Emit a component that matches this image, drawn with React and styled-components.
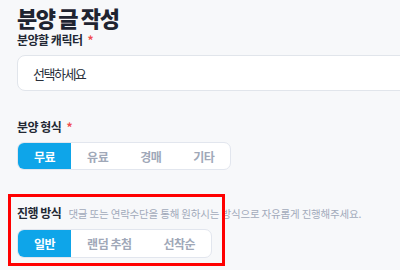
import React from 'react'
import styled, { createGlobalStyle } from 'styled-components';

const GlobalStyle = createGlobalStyle`
    body {
        margin: 0;
        background: #f7f8fa;
        overflow: hidden;
        font-family: "Noto Sans CJK KR", "Noto Sans", sans-serif;
    }
`;

const Page = styled.div`
    width: 400px;
    height: 270px;
    padding: 6px 0 0 17px;
    box-sizing: border-box;
`;

const Title = styled.h1`
    margin: 0;
    font-size: 22px;
    line-height: 22px;
    font-weight: 800;
    letter-spacing: -1.4px;
    color: #1f2431;
`;

const Field = styled.div`
    position: relative;
    margin-top: ${p => p.gap}px;
`;

const Label = styled.div`
    display: flex;
    align-items: baseline;
    font-size: 12px;
    line-height: 16px;
    font-weight: 700;
    letter-spacing: -0.5px;
    color: #232834;
`;

const Required = styled.span`
    color: #f04d4d;
    margin-left: 5px;
`;

const Hint = styled.span`
    margin-left: 7px;
    font-size: 10.5px;
    font-weight: 400;
    letter-spacing: -0.18px;
    color: #a2aaba;
`;

const Select = styled.div`
    margin-top: 7px;
    width: 400px;
    height: 36px;
    box-sizing: border-box;
    border: 1px solid #e1e5eb;
    border-radius: 8px;
    background: #fff;
    display: flex;
    align-items: center;
    padding-left: 15px;
    font-size: 13px;
    letter-spacing: -1.5px;
    color: #2a2f3a;
`;

const Segmented = styled.div`
    margin-top: 7px;
    display: inline-flex;
    height: ${p => p.h}px;
    box-sizing: border-box;
    border: 1px solid #e2e6ee;
    border-radius: 7px;
    background: #fff;
    overflow: hidden;
`;

const Segment = styled.div`
    display: flex;
    align-items: center;
    justify-content: center;
    padding: 0 ${p => p.pad}px;
    font-size: 12px;
    font-weight: 700;
    letter-spacing: -0.5px;
    color: ${p => (p.active ? '#fff' : '#a0a8b8')};
    background: ${p => (p.active ? '#0ea5e9' : 'transparent')};
`;

const Highlight = styled.div`
    position: absolute;
    left: -9px;
    top: -11px;
    width: 217px;
    height: 72px;
    box-sizing: border-box;
    border: 3px solid #ff0000;
    pointer-events: none;
`;

const App = () => {
    return (
        <Page>
            <GlobalStyle />
            <Title>분양 글 작성</Title>
            <Field gap={4}>
                <Label>분양할 캐릭터<Required>*</Required></Label>
                <Select>선택하세요</Select>
            </Field>
            <Field gap={28}>
                <Label>분양 형식<Required>*</Required></Label>
                <Segmented h={28}>
                    {['무료', '유료', '경매', '기타'].map((t, i) => (
                        <Segment key={t} pad={16} active={i === 0}>{t}</Segment>
                    ))}
                </Segmented>
            </Field>
            <Field gap={35}>
                <Label>
                    진행 방식
                    <Hint>댓글 또는 연락수단을 통해 원하시는 방식으로 자유롭게 진행해주세요.</Hint>
                </Label>
                <Segmented h={29}>
                    {['일반', '랜덤 추첨', '선착순'].map((t, i) => (
                        <Segment key={t} pad={16} active={i === 0}>{t}</Segment>
                    ))}
                </Segmented>
                <Highlight />
            </Field>
        </Page>
    )
}

export default App
